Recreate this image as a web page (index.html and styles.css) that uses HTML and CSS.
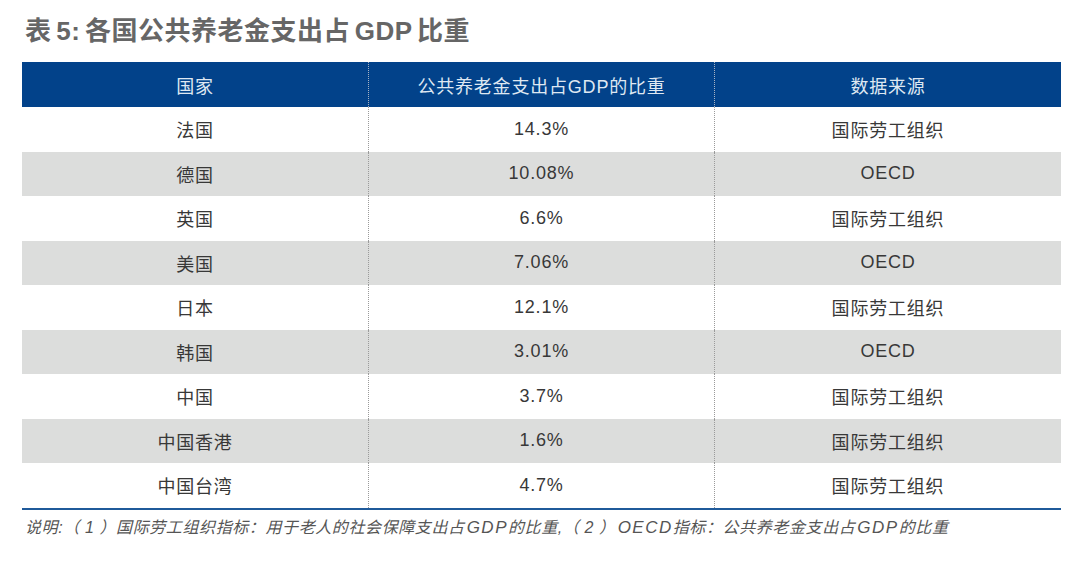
FILE: index.html
```html
<!DOCTYPE html>
<html lang="zh">
<head>
<meta charset="utf-8">
<link rel="stylesheet" href="styles.css">
</head>
<body>
<div class="page">
  <h1 class="title">表 5: 各国公共养老金支出占 GDP 比重</h1>
  <div class="table">
    <div class="row head"><div class="cell">国家</div><div class="cell">公共养老金支出占GDP的比重</div><div class="cell">数据来源</div></div>
    <div class="row"><div class="cell">法国</div><div class="cell">14.3%</div><div class="cell">国际劳工组织</div></div>
    <div class="row alt"><div class="cell">德国</div><div class="cell">10.08%</div><div class="cell">OECD</div></div>
    <div class="row"><div class="cell">英国</div><div class="cell">6.6%</div><div class="cell">国际劳工组织</div></div>
    <div class="row alt"><div class="cell">美国</div><div class="cell">7.06%</div><div class="cell">OECD</div></div>
    <div class="row"><div class="cell">日本</div><div class="cell">12.1%</div><div class="cell">国际劳工组织</div></div>
    <div class="row alt"><div class="cell">韩国</div><div class="cell">3.01%</div><div class="cell">OECD</div></div>
    <div class="row"><div class="cell">中国</div><div class="cell">3.7%</div><div class="cell">国际劳工组织</div></div>
    <div class="row alt"><div class="cell">中国香港</div><div class="cell">1.6%</div><div class="cell">国际劳工组织</div></div>
    <div class="row"><div class="cell">中国台湾</div><div class="cell">4.7%</div><div class="cell">国际劳工组织</div></div>
  </div>
  <p class="note">说明:（ 1 ）国际劳工组织指标：用于老人的社会保障支出占<span class="lat">GDP</span>的比重,（ 2 ）<span class="lat">OECD</span>指标：公共养老金支出占<span class="lat">GDP</span>的比重</p>
</div>
</body>
</html>
```
FILE: styles.css
```css
html, body {
  margin: 0;
  padding: 0;
  background: #ffffff;
}
.page {
  padding: 13px 19px 0 22px;
  font-family: "Liberation Sans", "Noto Sans CJK SC", sans-serif;
}
.title {
  margin: 0 0 12px 3px;
  font-size: 26px;
  line-height: 37px;
  font-weight: bold;
  color: #666666;
  letter-spacing: 0.5px;
  word-spacing: -3px;
}
.table {
  width: 1039px;
  border-bottom: 2px solid #1f5a9a;
}
.row {
  display: grid;
  grid-template-columns: 346px 346px 347px;
  height: 44.5px;
  background: #ffffff;
}
.row.alt {
  background: #dcdddc;
}
.row.head {
  height: 45px;
  background: #02428a;
}
.cell {
  display: flex;
  align-items: center;
  justify-content: center;
  font-size: 18px;
  letter-spacing: 0.8px;
  color: #383838;
}
.head .cell {
  color: #dfe8f2;
}
.cell + .cell {
  border-left: 1px dotted #9a9a9a;
}
.head .cell + .cell {
  border-left: 1px dotted #a8b4c4;
}
.note {
  margin: 8px 0 0 3px;
  font-size: 16px;
  line-height: 20px;
  font-style: italic;
  letter-spacing: 0.6px;
  color: #555555;
}
.lat {
  font-size: 17px;
  letter-spacing: 1.5px;
  margin-left: 2px;
}
```
